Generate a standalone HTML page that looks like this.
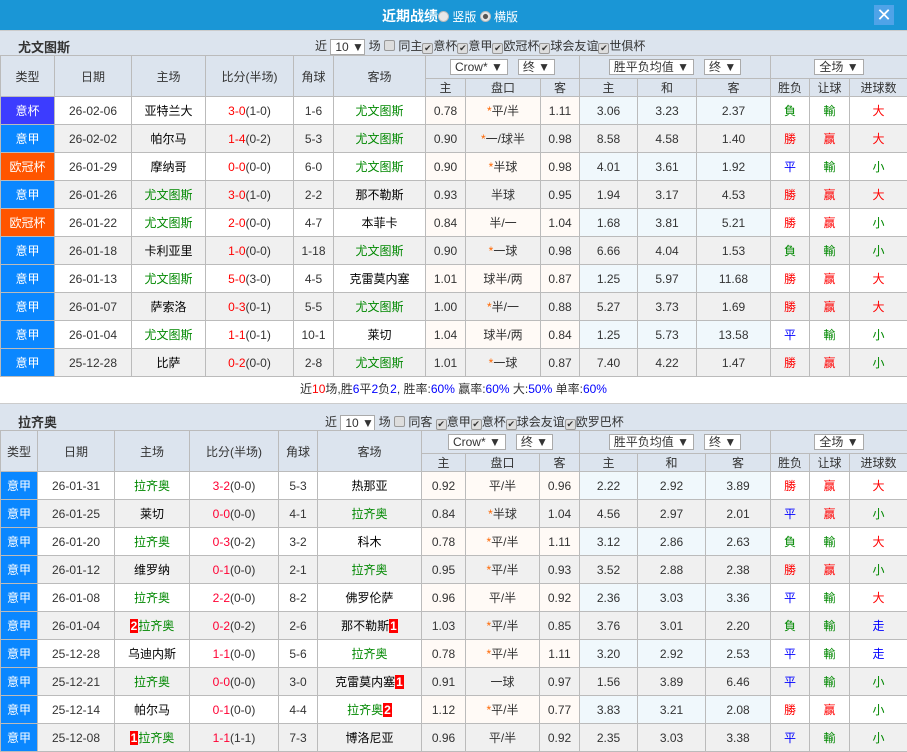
<!DOCTYPE html>
<html><head><meta charset="utf-8">
<style>
*{margin:0;padding:0;box-sizing:border-box}
body{width:907px;height:752px;overflow:hidden;background:#fff;font-family:"Liberation Sans","Noto Sans CJK SC",sans-serif;font-size:12px;color:#333}
.top{height:30px;background:#1a96d6;position:relative;color:#fff}
.top .t{position:absolute;left:382px;top:6px;font-size:14px;font-weight:bold}
.top .r{position:absolute;top:8px;font-size:12px}
.rad{display:inline-block;width:11px;height:11px;border-radius:50%;background:#e8e8e8;border:1px solid #bbb;vertical-align:-1px}
.rad.on{background:radial-gradient(#555 35%,#e8e8e8 45%)}
.x{position:absolute;left:874px;top:5px;width:20px;height:20px;background:#4fa3e8;color:#fff;font-size:18px;line-height:20px;text-align:center}
.sec{height:25px;background:#dce4ee;position:relative;border-top:1px solid #ccc}
.sec .n{position:absolute;left:18px;top:6px;font-weight:bold;font-size:13px;color:#333}
.sec .c{position:absolute;top:6px;font-size:12px;white-space:nowrap}
.sel{display:inline-block;border:1px solid #aaa;background:#fff;padding:0 4px;height:16px;line-height:14px;vertical-align:middle;font-size:12px}
.cb{display:inline-block;width:11px;height:11px;border:1px solid #999;border-radius:2px;background:#ddd;vertical-align:-1px;font-size:9px;line-height:9px;text-align:center;color:#333}
table{border-collapse:collapse;table-layout:fixed;position:absolute;left:0}
td{border:1px solid #bbb;text-align:center;font-size:12px;overflow:hidden;white-space:nowrap;padding:0}
.h td{background:#dce4ee;color:#333}
tr.d td{height:28px;background:#fff}
tr.d.g td{background:#f0f0f0}
tr.d td.o{background:#fffaf6}
tr.d td.p{background:#f0f8fc}
tr.d.g td.o,tr.d.g td.p{background:#f0f0f0}
.ty{color:#fff!important}
.yb{background:#3c3cff!important}.yj{background:#0a87ff!important}.oc{background:#ff5500!important}
.gr{color:#080}.rd{color:red}.bl{color:#00f}.bk{color:#000}.st{color:#f60}
.sc{color:red}.sc2{color:#f03}
.rc{background:#f00;color:#fff;padding:0 1px;font-weight:bold}
.sum{position:absolute;left:0;top:376px;width:907px;height:27px;line-height:27px;text-align:center;font-size:12px;color:#333}
</style></head><body>
<div class="top"><span class="t">近期战绩</span><span class="r" style="left:438px"><span class="rad"></span> 竖版 <span class="rad on"></span> 横版</span><div class="x">✕</div></div>
<div class="sec" style="position:absolute;top:30px;width:907px"><span class="n">尤文图斯</span><span class="c" style="left:315px">近 <span class="sel" style="width:35px">10 ▼</span> 场 <span class="cb"></span> 同主<span class="cb">✔</span>意杯<span class="cb">✔</span>意甲<span class="cb">✔</span>欧冠杯<span class="cb">✔</span>球会友谊<span class="cb">✔</span>世俱杯</span></div>
<table style="top:55px;width:907px">
<colgroup><col style="width:54px"><col style="width:77px"><col style="width:74px"><col style="width:88px"><col style="width:40px"><col style="width:92px"><col style="width:40px"><col style="width:75px"><col style="width:39px"><col style="width:58px"><col style="width:59px"><col style="width:74px"><col style="width:39px"><col style="width:40px"><col style="width:58px"></colgroup>
<tr class="h" style="height:23px"><td rowspan="2">类型</td><td rowspan="2">日期</td><td rowspan="2">主场</td><td rowspan="2">比分(半场)</td><td rowspan="2">角球</td><td rowspan="2">客场</td><td colspan="3"><span class="sel">Crow* ▼</span>&nbsp;&nbsp;&nbsp;<span class="sel">终 ▼</span></td><td colspan="3"><span class="sel">胜平负均值 ▼</span>&nbsp;&nbsp;&nbsp;<span class="sel">终 ▼</span></td><td colspan="3"><span class="sel">全场 ▼</span></td></tr>
<tr class="h" style="height:18px"><td>主</td><td>盘口</td><td>客</td><td>主</td><td>和</td><td>客</td><td>胜负</td><td>让球</td><td>进球数</td></tr>
<tr class="d"><td class="ty yb">意杯</td><td>26-02-06</td><td class="bk">亚特兰大</td><td><span class="sc">3-0</span>(1-0)</td><td>1-6</td><td class="gr">尤文图斯</td><td class="o">0.78</td><td class="o"><span class="st">*</span>平/半</td><td class="o">1.11</td><td class="p">3.06</td><td class="p">3.23</td><td class="p">2.37</td><td class="gr">負</td><td class="gr">輸</td><td class="rd">大</td></tr>
<tr class="d g"><td class="ty yj">意甲</td><td>26-02-02</td><td class="bk">帕尔马</td><td><span class="sc">1-4</span>(0-2)</td><td>5-3</td><td class="gr">尤文图斯</td><td class="o">0.90</td><td class="o"><span class="st">*</span>一/球半</td><td class="o">0.98</td><td class="p">8.58</td><td class="p">4.58</td><td class="p">1.40</td><td class="rd">勝</td><td class="rd">赢</td><td class="rd">大</td></tr>
<tr class="d"><td class="ty oc">欧冠杯</td><td>26-01-29</td><td class="bk">摩纳哥</td><td><span class="sc">0-0</span>(0-0)</td><td>6-0</td><td class="gr">尤文图斯</td><td class="o">0.90</td><td class="o"><span class="st">*</span>半球</td><td class="o">0.98</td><td class="p">4.01</td><td class="p">3.61</td><td class="p">1.92</td><td class="bl">平</td><td class="gr">輸</td><td class="gr">小</td></tr>
<tr class="d g"><td class="ty yj">意甲</td><td>26-01-26</td><td class="gr">尤文图斯</td><td><span class="sc">3-0</span>(1-0)</td><td>2-2</td><td class="bk">那不勒斯</td><td class="o">0.93</td><td class="o">半球</td><td class="o">0.95</td><td class="p">1.94</td><td class="p">3.17</td><td class="p">4.53</td><td class="rd">勝</td><td class="rd">赢</td><td class="rd">大</td></tr>
<tr class="d"><td class="ty oc">欧冠杯</td><td>26-01-22</td><td class="gr">尤文图斯</td><td><span class="sc">2-0</span>(0-0)</td><td>4-7</td><td class="bk">本菲卡</td><td class="o">0.84</td><td class="o">半/一</td><td class="o">1.04</td><td class="p">1.68</td><td class="p">3.81</td><td class="p">5.21</td><td class="rd">勝</td><td class="rd">赢</td><td class="gr">小</td></tr>
<tr class="d g"><td class="ty yj">意甲</td><td>26-01-18</td><td class="bk">卡利亚里</td><td><span class="sc">1-0</span>(0-0)</td><td>1-18</td><td class="gr">尤文图斯</td><td class="o">0.90</td><td class="o"><span class="st">*</span>一球</td><td class="o">0.98</td><td class="p">6.66</td><td class="p">4.04</td><td class="p">1.53</td><td class="gr">負</td><td class="gr">輸</td><td class="gr">小</td></tr>
<tr class="d"><td class="ty yj">意甲</td><td>26-01-13</td><td class="gr">尤文图斯</td><td><span class="sc">5-0</span>(3-0)</td><td>4-5</td><td class="bk">克雷莫内塞</td><td class="o">1.01</td><td class="o">球半/两</td><td class="o">0.87</td><td class="p">1.25</td><td class="p">5.97</td><td class="p">11.68</td><td class="rd">勝</td><td class="rd">赢</td><td class="rd">大</td></tr>
<tr class="d g"><td class="ty yj">意甲</td><td>26-01-07</td><td class="bk">萨索洛</td><td><span class="sc">0-3</span>(0-1)</td><td>5-5</td><td class="gr">尤文图斯</td><td class="o">1.00</td><td class="o"><span class="st">*</span>半/一</td><td class="o">0.88</td><td class="p">5.27</td><td class="p">3.73</td><td class="p">1.69</td><td class="rd">勝</td><td class="rd">赢</td><td class="rd">大</td></tr>
<tr class="d"><td class="ty yj">意甲</td><td>26-01-04</td><td class="gr">尤文图斯</td><td><span class="sc">1-1</span>(0-1)</td><td>10-1</td><td class="bk">莱切</td><td class="o">1.04</td><td class="o">球半/两</td><td class="o">0.84</td><td class="p">1.25</td><td class="p">5.73</td><td class="p">13.58</td><td class="bl">平</td><td class="gr">輸</td><td class="gr">小</td></tr>
<tr class="d g"><td class="ty yj">意甲</td><td>25-12-28</td><td class="bk">比萨</td><td><span class="sc">0-2</span>(0-0)</td><td>2-8</td><td class="gr">尤文图斯</td><td class="o">1.01</td><td class="o"><span class="st">*</span>一球</td><td class="o">0.87</td><td class="p">7.40</td><td class="p">4.22</td><td class="p">1.47</td><td class="rd">勝</td><td class="rd">赢</td><td class="gr">小</td></tr>
</table>
<div class="sum">近<span class="rd">10</span>场,胜<span class="bl">6</span>平<span class="bl">2</span>负<span class="bl">2</span>, 胜率:<span class="bl">60%</span> 赢率:<span class="bl">60%</span> 大:<span class="bl">50%</span> 单率:<span class="bl">60%</span></div>
<div class="sec" style="position:absolute;top:403px;width:907px;height:27px"><span class="n" style="top:8px">拉齐奥</span><span class="c" style="left:325px;top:9px">近 <span class="sel" style="width:35px">10 ▼</span> 场 <span class="cb"></span> 同客 <span class="cb">✔</span>意甲<span class="cb">✔</span>意杯<span class="cb">✔</span>球会友谊<span class="cb">✔</span>欧罗巴杯</span></div>
<table style="top:430px;width:907px">
<colgroup><col style="width:37px"><col style="width:77px"><col style="width:75px"><col style="width:89px"><col style="width:39px"><col style="width:104px"><col style="width:44px"><col style="width:74px"><col style="width:40px"><col style="width:58px"><col style="width:68px"><col style="width:65px"><col style="width:39px"><col style="width:40px"><col style="width:58px"></colgroup>
<tr class="h" style="height:23px"><td rowspan="2">类型</td><td rowspan="2">日期</td><td rowspan="2">主场</td><td rowspan="2">比分(半场)</td><td rowspan="2">角球</td><td rowspan="2">客场</td><td colspan="3"><span class="sel">Crow* ▼</span>&nbsp;&nbsp;&nbsp;<span class="sel">终 ▼</span></td><td colspan="3"><span class="sel">胜平负均值 ▼</span>&nbsp;&nbsp;&nbsp;<span class="sel">终 ▼</span></td><td colspan="3"><span class="sel">全场 ▼</span></td></tr>
<tr class="h" style="height:18px"><td>主</td><td>盘口</td><td>客</td><td>主</td><td>和</td><td>客</td><td>胜负</td><td>让球</td><td>进球数</td></tr>
<tr class="d"><td class="ty yj">意甲</td><td>26-01-31</td><td class="gr">拉齐奥</td><td><span class="sc2">3-2</span>(0-0)</td><td>5-3</td><td class="bk">热那亚</td><td class="o">0.92</td><td class="o">平/半</td><td class="o">0.96</td><td class="p">2.22</td><td class="p">2.92</td><td class="p">3.89</td><td class="rd">勝</td><td class="rd">赢</td><td class="rd">大</td></tr>
<tr class="d g"><td class="ty yj">意甲</td><td>26-01-25</td><td class="bk">莱切</td><td><span class="sc2">0-0</span>(0-0)</td><td>4-1</td><td class="gr">拉齐奥</td><td class="o">0.84</td><td class="o"><span class="st">*</span>半球</td><td class="o">1.04</td><td class="p">4.56</td><td class="p">2.97</td><td class="p">2.01</td><td class="bl">平</td><td class="rd">赢</td><td class="gr">小</td></tr>
<tr class="d"><td class="ty yj">意甲</td><td>26-01-20</td><td class="gr">拉齐奥</td><td><span class="sc2">0-3</span>(0-2)</td><td>3-2</td><td class="bk">科木</td><td class="o">0.78</td><td class="o"><span class="st">*</span>平/半</td><td class="o">1.11</td><td class="p">3.12</td><td class="p">2.86</td><td class="p">2.63</td><td class="gr">負</td><td class="gr">輸</td><td class="rd">大</td></tr>
<tr class="d g"><td class="ty yj">意甲</td><td>26-01-12</td><td class="bk">维罗纳</td><td><span class="sc2">0-1</span>(0-0)</td><td>2-1</td><td class="gr">拉齐奥</td><td class="o">0.95</td><td class="o"><span class="st">*</span>平/半</td><td class="o">0.93</td><td class="p">3.52</td><td class="p">2.88</td><td class="p">2.38</td><td class="rd">勝</td><td class="rd">赢</td><td class="gr">小</td></tr>
<tr class="d"><td class="ty yj">意甲</td><td>26-01-08</td><td class="gr">拉齐奥</td><td><span class="sc2">2-2</span>(0-0)</td><td>8-2</td><td class="bk">佛罗伦萨</td><td class="o">0.96</td><td class="o">平/半</td><td class="o">0.92</td><td class="p">2.36</td><td class="p">3.03</td><td class="p">3.36</td><td class="bl">平</td><td class="gr">輸</td><td class="rd">大</td></tr>
<tr class="d g"><td class="ty yj">意甲</td><td>26-01-04</td><td class="gr"><span class="rc">2</span>拉齐奥</td><td><span class="sc2">0-2</span>(0-2)</td><td>2-6</td><td class="bk">那不勒斯<span class="rc">1</span></td><td class="o">1.03</td><td class="o"><span class="st">*</span>平/半</td><td class="o">0.85</td><td class="p">3.76</td><td class="p">3.01</td><td class="p">2.20</td><td class="gr">負</td><td class="gr">輸</td><td class="bl">走</td></tr>
<tr class="d"><td class="ty yj">意甲</td><td>25-12-28</td><td class="bk">乌迪内斯</td><td><span class="sc2">1-1</span>(0-0)</td><td>5-6</td><td class="gr">拉齐奥</td><td class="o">0.78</td><td class="o"><span class="st">*</span>平/半</td><td class="o">1.11</td><td class="p">3.20</td><td class="p">2.92</td><td class="p">2.53</td><td class="bl">平</td><td class="gr">輸</td><td class="bl">走</td></tr>
<tr class="d g"><td class="ty yj">意甲</td><td>25-12-21</td><td class="gr">拉齐奥</td><td><span class="sc2">0-0</span>(0-0)</td><td>3-0</td><td class="bk">克雷莫内塞<span class="rc">1</span></td><td class="o">0.91</td><td class="o">一球</td><td class="o">0.97</td><td class="p">1.56</td><td class="p">3.89</td><td class="p">6.46</td><td class="bl">平</td><td class="gr">輸</td><td class="gr">小</td></tr>
<tr class="d"><td class="ty yj">意甲</td><td>25-12-14</td><td class="bk">帕尔马</td><td><span class="sc2">0-1</span>(0-0)</td><td>4-4</td><td class="gr">拉齐奥<span class="rc">2</span></td><td class="o">1.12</td><td class="o"><span class="st">*</span>平/半</td><td class="o">0.77</td><td class="p">3.83</td><td class="p">3.21</td><td class="p">2.08</td><td class="rd">勝</td><td class="rd">赢</td><td class="gr">小</td></tr>
<tr class="d g"><td class="ty yj">意甲</td><td>25-12-08</td><td class="gr"><span class="rc">1</span>拉齐奥</td><td><span class="sc2">1-1</span>(1-1)</td><td>7-3</td><td class="bk">博洛尼亚</td><td class="o">0.96</td><td class="o">平/半</td><td class="o">0.92</td><td class="p">2.35</td><td class="p">3.03</td><td class="p">3.38</td><td class="bl">平</td><td class="gr">輸</td><td class="gr">小</td></tr>
</table>
</body></html>
